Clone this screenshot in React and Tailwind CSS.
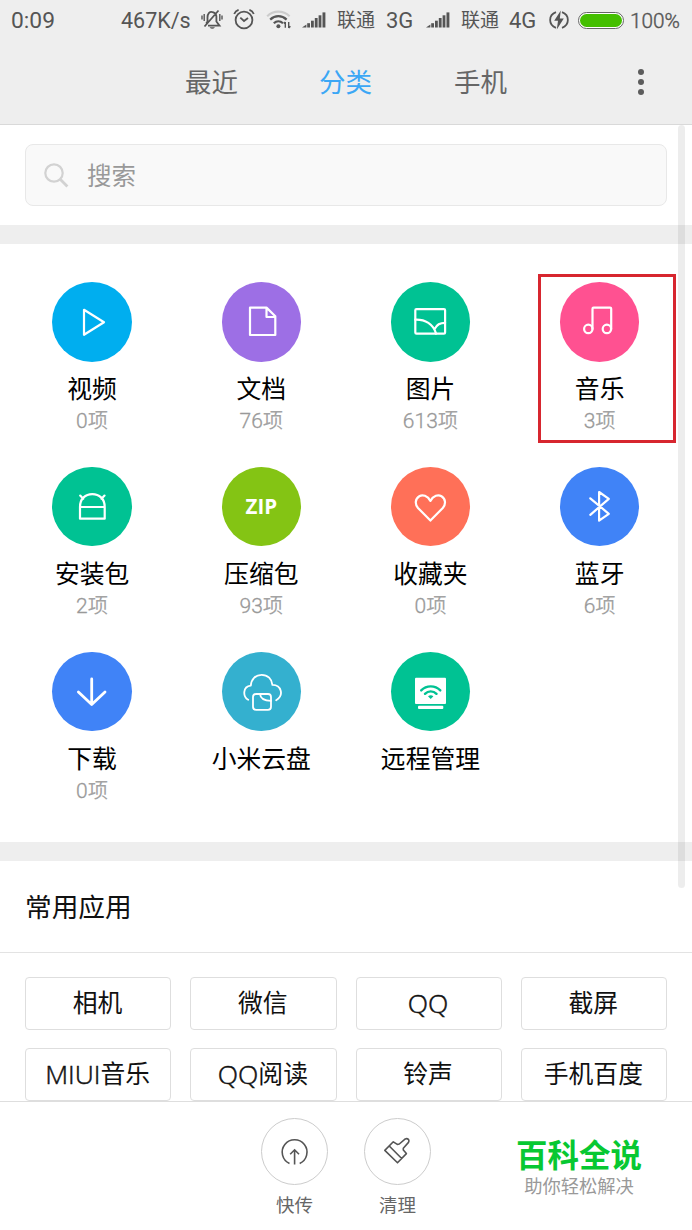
import clsx from 'clsx';

const VideoIcon = () => <path d="M32 27.8V52.8L52 40.2Z" />;

const DocIcon = () => (
  <path d="M44.5 25.6H28V53H53.3V34.2L44.5 25.6V35H53.3" />
);

const PictureIcon = () => (
  <>
    <rect x="24.3" y="27.1" width="29.8" height="24.5" rx="1.2" />
    <path d="M24.3 37.6C34 37.2 42.5 42 45 51.6M54.1 40.8C49 40.8 45.5 43 43.9 46.6" />
  </>
);

const MusicIcon = () => (
  <>
    <circle cx="28.3" cy="46.9" r="4.2" />
    <circle cx="46.9" cy="46.9" r="4.2" />
    <path d="M32.5 47V26.8Q32.5 25.7 33.6 25.7H50.1Q51.2 25.7 51.2 26.8V47" />
  </>
);

const ApkIcon = () => (
  <path d="M28 40C28 31.5 33.5 27.2 40.3 27.2S52.7 31.5 52.7 40M28 40H52.7V51.7H28ZM28.2 28.6L31.2 31.8M52.5 28.6L49.5 31.8" />
);

const HeartIcon = () => (
  <path d="M39.4 33.9C36.5 28.4 31.5 27.3 28.3 29.2C24 31.7 23.8 37.4 27 41L39.4 53.6L51.8 41C55 37.4 54.8 31.7 50.5 29.2C47.3 27.3 42.3 28.4 39.4 33.9Z" />
);

const BluetoothIcon = () => (
  <path d="M30.3 31.3L48.8 46.8L39.1 53.6V25L48.8 31.8L30.3 47.8" />
);

const DownloadIcon = () => (
  <path strokeWidth="2.8" d="M39.7 27V52.6M26.4 40L39.7 52.6L53 40" />
);

const CloudIcon = () => (
  <>
    <path
      strokeWidth="1.8"
      d="M26.2 47.8C20.7 44.5 20.5 34.5 28.8 33.6C29.2 27.2 33.5 22.8 39.6 22.8S50 27.2 50.4 32.9C59.5 32.9 62.2 43.5 54.2 48.2"
    />
    <rect strokeWidth="1.8" x="31" y="42" width="18" height="15.8" rx="3" />
    <path strokeWidth="1.8" d="M38 42.2C38.5 46.5 42 48.8 49 48.8" />
  </>
);

const RemoteIcon = () => (
  <>
    <rect x="24" y="25.7" width="31" height="26.3" rx="1" fill="#fff" stroke="none" />
    <rect x="27" y="53.7" width="25.3" height="3.2" rx="1" fill="#fff" stroke="none" />
    <g stroke="#00c293" strokeWidth="2.4" fill="none">
      <path d="M30.2 38.4C35.5 33 44 33 49.3 38.4M34 41.8C37.2 38.6 42.3 38.6 45.5 41.8" />
    </g>
    <path d="M37 44.2Q39.7 42.2 42.4 44.2L39.7 47Z" fill="#00c293" stroke="none" />
  </>
);

const categories = [
  { name: '视频', count: 0, color: 'bg-[#00aeef]', Icon: VideoIcon },
  { name: '文档', count: 76, color: 'bg-[#9d6fe5]', Icon: DocIcon },
  { name: '图片', count: 613, color: 'bg-[#00c293]', Icon: PictureIcon },
  { name: '音乐', count: 3, color: 'bg-[#ff5191]', Icon: MusicIcon, marked: true },
  { name: '安装包', count: 2, color: 'bg-[#00c293]', Icon: ApkIcon },
  { name: '压缩包', count: 93, color: 'bg-[#84c414]', text: 'ZIP' },
  { name: '收藏夹', count: 0, color: 'bg-[#ff7058]', Icon: HeartIcon },
  { name: '蓝牙', count: 6, color: 'bg-[#4083f7]', Icon: BluetoothIcon },
  { name: '下载', count: 0, color: 'bg-[#4083f7]', Icon: DownloadIcon },
  { name: '小米云盘', color: 'bg-[#34b0cf]', Icon: CloudIcon },
  { name: '远程管理', color: 'bg-[#00c293]', Icon: RemoteIcon },
];

const apps = [
  { latin: '', name: '相机' },
  { latin: '', name: '微信' },
  { latin: 'QQ', name: '' },
  { latin: '', name: '截屏' },
  { latin: 'MIUI', name: '音乐' },
  { latin: 'QQ', name: '阅读' },
  { latin: '', name: '铃声' },
  { latin: '', name: '手机百度' },
];

const Signal = ({ className }) => (
  <svg className={clsx('h-4 w-6 shrink-0', className)} viewBox="0 0 24 16" fill="#555">
    <path d="M0 15.5L4.4 12.6V15.5Z" />
    <rect x="5.2" y="11.2" width="2.8" height="4.3" />
    <rect x="9" y="8.7" width="2.8" height="6.8" />
    <rect x="12.8" y="6" width="2.8" height="9.5" />
    <rect x="16.6" y="3.3" width="2.8" height="12.2" />
    <rect x="20.5" y="0.4" width="2.9" height="15.1" />
  </svg>
);

function StatusBar() {
  return (
    <div className="flex h-10 items-center whitespace-nowrap pl-[11px] text-[22px] leading-10 text-[#555]">
      <span className="w-[110px] shrink-0 pt-px text-[22.8px]">0:09</span>
      <span className="w-[80px] shrink-0 pt-px text-[21.5px]">467K/s</span>
      {/* muted bell */}
      <svg className="h-[22px] w-[22px] shrink-0" viewBox="0 0 22 22" fill="none" stroke="#555" strokeWidth="1.8">
        <path d="M8 3.8C10 2 15.2 3.2 15.4 7.5V12.5L18.5 16.6H7M5.2 14.5L6.5 12.5V8.5C6.5 6.5 7 5 8 3.8M17.5 1.5L3.5 17.5" />
        <path d="M8.5 18.2H14Q11.3 21.5 8.5 18.2Z" fill="#555" stroke="none" />
        <path d="M3.2 5V12M1 6.5V10.5M18.8 5V12M21 6.5V10.5" strokeWidth="1.4" />
      </svg>
      {/* alarm */}
      <svg className="ml-[10px] h-[22px] w-[22px] shrink-0" viewBox="0 0 22 22" fill="none" stroke="#555" strokeWidth="1.8">
        <circle cx="11" cy="11" r="8.4" />
        <path d="M7.3 8.7L11 12L15 9M1.2 5Q2.5 1.8 5.6 0.8M20.8 5Q19.5 1.8 16.4 0.8" />
      </svg>
      {/* wifi */}
      <svg className="ml-[11px] h-[20px] w-[26px] shrink-0" viewBox="0 0 26 20" fill="none" strokeWidth="2.2">
        <path d="M1.2 6.2C7.5 0.2 17 0.2 23.6 6.2" stroke="#ccc" />
        <path d="M4.2 9.6C9 5 15.8 5 20.6 9.6M7.8 13.2C10.5 10.6 14.2 10.6 17 13.2" stroke="#555" />
        <circle cx="12.4" cy="16.2" r="2" fill="#555" />
        <path d="M19.3 12V17.8M22.7 12V18M17.8 13.5L19.3 12M22.7 18L24.4 16.3" stroke="#555" strokeWidth="1.4" />
      </svg>
      <Signal className="ml-[10px]" />
      <span className="ml-[11px] w-[49px] shrink-0 pt-[2px] text-[19px]">联通</span>
      <span className="w-[40px] shrink-0 pt-px text-[22px]">3G</span>
      <Signal />
      <span className="ml-[11px] w-[48px] shrink-0 pt-[2px] text-[19px]">联通</span>
      <span className="w-[41px] shrink-0 pt-px text-[22px]">4G</span>
      {/* charging */}
      <svg className="-ml-px h-5 w-5 shrink-0" viewBox="0 0 20 20" fill="none" stroke="#555" strokeWidth="1.8">
        <path d="M7 2.2C-0.8 5 -0.8 15 7 17.8M13 2.2C20.8 5 20.8 15 13 17.8" />
        <path d="M11.8 0.5L5.2 10.8H9L7.8 19.5L14.8 8.4H10.8Z" fill="#555" stroke="none" />
      </svg>
      <div className="ml-[9px] h-[17px] w-[46px] shrink-0 rounded-full border border-[#666] bg-white p-[1px]">
        <div className="h-full rounded-full bg-[#44bf00]" />
      </div>
      <span className="ml-[6px] pt-px text-[20.8px] font-light [-webkit-text-stroke:0.4px]">100%</span>
    </div>
  );
}

function Category({ name, count, color, Icon, text, marked }) {
  return (
    <div className="relative flex h-[184.7px] flex-col items-center">
      <div className={clsx('flex h-[79.5px] w-[79.5px] items-center justify-center rounded-full', color)}>
        {Icon ? (
          <svg
            className="h-full w-full"
            viewBox="0 0 79.5 79.5"
            fill="none"
            stroke="#fff"
            strokeWidth="2.2"
            strokeLinecap="round"
            strokeLinejoin="round"
          >
            <Icon />
          </svg>
        ) : (
          <span className="font-['Open_Sans'] text-[20.5px] font-bold text-white">{text}</span>
        )}
      </div>
      <div className="mt-[11.5px] h-[34px] text-[24.8px] leading-[34px] text-black">{name}</div>
      {count !== undefined && (
        <div className="text-[20.3px] leading-[28px] text-[#a3a3a3]">
          <span className="text-[21px] font-light text-[#999] [-webkit-text-stroke:0.3px]">{count}</span>项
        </div>
      )}
      {marked && (
        <div className="absolute left-[23px] -top-[8px] h-[169px] w-[138px] border-3 border-[#d7262f]" />
      )}
    </div>
  );
}

export default function App() {
  return (
    <div className="relative flex h-[1230px] w-[692px] flex-col overflow-hidden bg-white font-[Roboto,'Noto_Sans_CJK_SC',sans-serif]">
      <header className="h-[125px] shrink-0 border-b border-[#d9d9d9] bg-[#eee]">
        <StatusBar />
        <div className="flex h-[84px] items-center pl-[185px] text-[26.5px] text-[#666]">
          <span className="w-[134px] pt-[2px]">最近</span>
          <span className="w-[135px] pt-[2px] text-[#3ca7f5]">分类</span>
          <span className="w-[184px] pt-[2px]">手机</span>
          <div className="flex flex-col gap-1 pb-px">
            <i className="h-1.5 w-1.5 rounded-full bg-[#5c5c5c]" />
            <i className="h-1.5 w-1.5 rounded-full bg-[#5c5c5c]" />
            <i className="h-1.5 w-1.5 rounded-full bg-[#5c5c5c]" />
          </div>
        </div>
      </header>

      <div className="h-[100px] shrink-0 px-[25px] pt-[19px]">
        <div className="flex h-[62px] items-center rounded-lg border border-[#e8e8e8] bg-[#f9f9f9] pl-[18px] text-[24.5px] text-[#999]">
          <svg className="mr-[18px] h-[25px] w-[25px]" viewBox="0 0 25 25" fill="none" stroke="#d2d2d2" strokeWidth="2.2">
            <circle cx="10" cy="10" r="8.7" />
            <path d="M16.2 16.2L23.4 23.4" strokeWidth="2.8" />
          </svg>
          <span className="pt-[4px]">搜索</span>
        </div>
      </div>

      <div className="h-[19px] shrink-0 bg-[#eee]" />

      <div className="grid h-[598px] w-[684px] shrink-0 grid-cols-[repeat(4,169.2px)] content-start pl-[7.5px] pt-[38.3px]">
        {categories.map((c) => (
          <Category key={c.name} {...c} />
        ))}
      </div>

      <div className="h-[19px] shrink-0 bg-[#eee]" />

      <h2 className="h-[92px] shrink-0 border-b border-[#e3e3e3] pl-[25px] pt-[2px] text-[26.7px] leading-[91px] text-[#111]">
        常用应用
      </h2>
      <div className="grid h-[148px] shrink-0 grid-cols-4 content-start gap-x-[19px] gap-y-[18px] px-[25px] pt-[24px]">
        {apps.map(({ latin, name }) => (
          <div
            key={latin + name}
            className="flex h-[53px] items-center justify-center rounded border border-[#dedede] pr-px text-[24.8px] leading-[51px] text-[#111]"
          >
            {latin && (
              <span className="font-['Open_Sans'] text-[26.5px] font-light [-webkit-text-stroke:0.5px]">{latin}</span>
            )}
            {name && <span>{name}</span>}
          </div>
        ))}
      </div>

      <footer className="flex h-[129px] shrink-0 border-t border-[#dedede] bg-white pl-[261px] pt-[16px] text-[18.5px] text-[#666]">
        <div className="flex w-[67px] flex-col items-center">
          <svg className="h-[67px] w-[67px]" viewBox="0 0 67 67" fill="none" stroke="#555" strokeWidth="1.6">
            <circle cx="33.5" cy="33.5" r="33" stroke="#ccc" strokeWidth="1" />
            <path d="M28.5 45.5A12.4 12.4 0 1 1 38.7 45.5M33.6 46.5V32M29.2 36.3L33.6 31.8L38 36.3" />
          </svg>
          <span className="mt-[6.5px] leading-[28px]">快传</span>
        </div>
        <div className="ml-[36px] flex w-[67px] flex-col items-center">
          <svg className="h-[67px] w-[67px]" viewBox="0 0 67 67" fill="none" stroke="#555" strokeWidth="1.6" strokeLinejoin="round">
            <circle cx="33.5" cy="33.5" r="33" stroke="#ccc" strokeWidth="1" />
            <path d="M20.8 32.4L29.3 23.8L33.3 26.4L35.3 26L41.3 20.9Q43.3 20.2 44.6 21.6Q45.4 23 44.5 24.4L39.3 30.2V32L42.4 35.6L33.5 44.8ZM25.5 28.2L37.7 40.5" />
          </svg>
          <span className="mt-[6.5px] leading-[28px]">清理</span>
        </div>
        <div className="ml-[78px] mt-[19px] flex w-[140px] flex-col items-center whitespace-nowrap">
          <span className="text-[31.5px] font-bold leading-[40px] text-[#07c832]">百科全说</span>
          <span className="text-[18.3px] leading-[20px] text-[#999]">助你轻松解决</span>
        </div>
      </footer>

      {/* scroll indicator */}
      <div className="absolute left-[678px] top-[125px] h-[763px] w-[7px] rounded-full bg-black/7" />
    </div>
  );
}
